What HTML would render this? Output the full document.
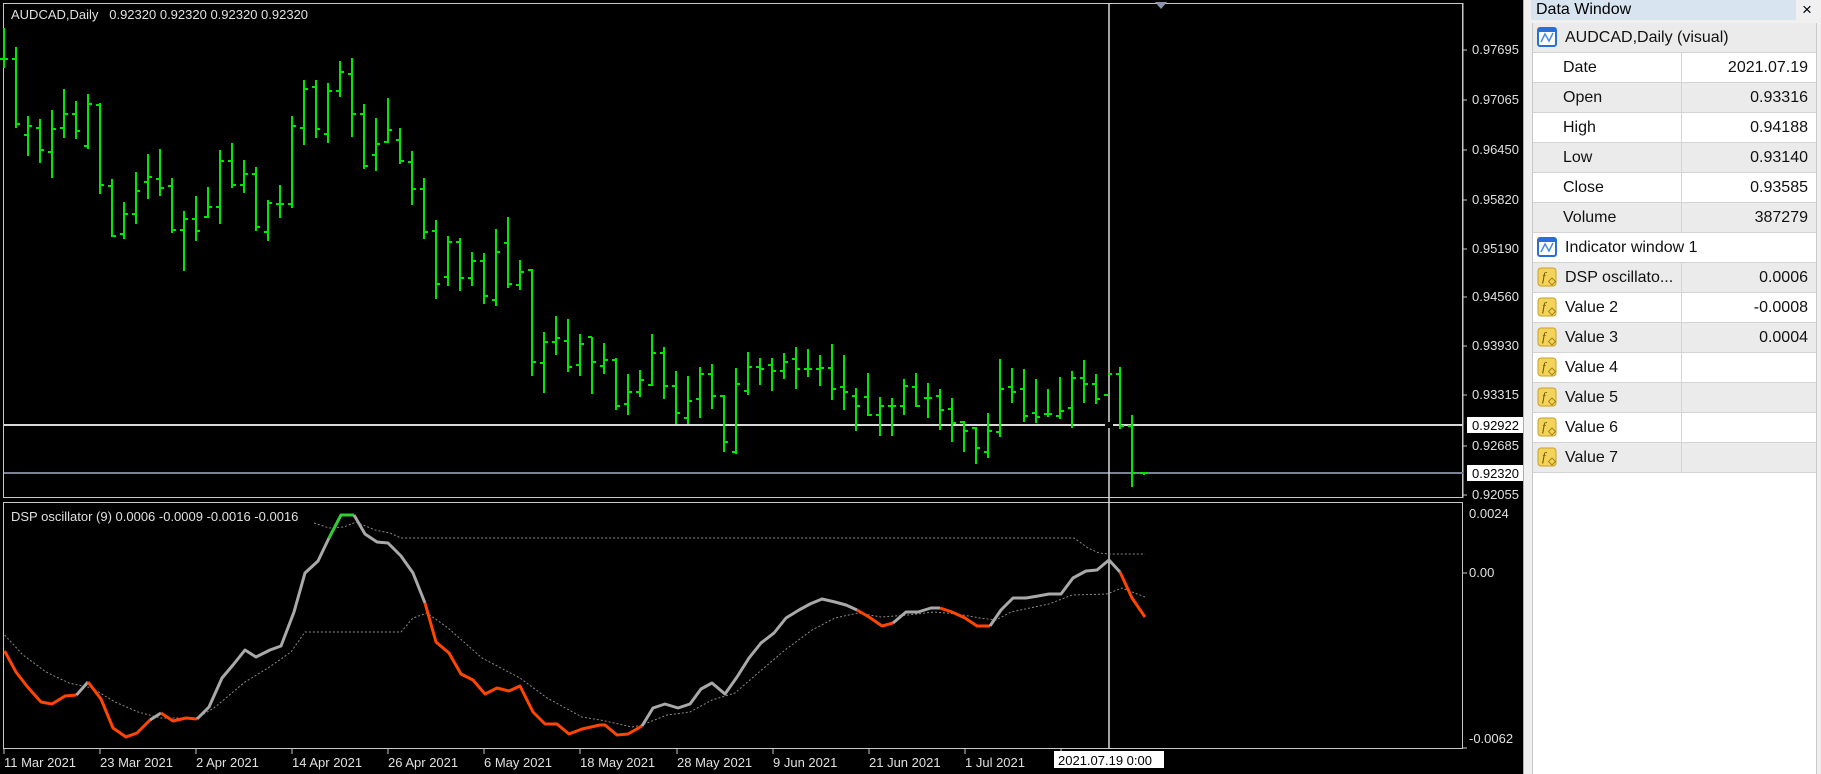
<!DOCTYPE html>
<html><head><meta charset="utf-8"><style>
html,body{margin:0;padding:0;width:1821px;height:774px;overflow:hidden;background:#000;}
#dw{position:absolute;left:1523px;top:0;width:298px;height:774px;background:#f0f0f0;border-left:1px solid #b0b0b0;}
#title{position:absolute;left:7px;top:0;width:265px;height:20px;background:#d8e4f0;font:16px "Liberation Sans",sans-serif;color:#000;line-height:20px;padding-left:5px;box-sizing:border-box;}
#close{position:absolute;left:278px;top:0;font:17px "Liberation Sans",sans-serif;line-height:20px;}
#tbl{position:absolute;left:8px;top:23px;width:283px;height:751px;background:#fff;border-left:1px solid #c8c8c8;border-right:1px solid #c8c8c8;}
.r{position:absolute;left:0;width:283px;height:29px;border-bottom:1px solid #d4d4d4;font:16px "Liberation Sans",sans-serif;color:#111;line-height:29px;}
.g{background:#ebebeb;}
.n{position:absolute;left:30px;}
.v{position:absolute;right:8px;}
.c{position:absolute;left:148px;top:0;width:1px;height:29px;background:#d4d4d4;}
.ic{position:absolute;left:4px;top:4px;width:20px;height:20px;}
.h .n{left:32px;}
</style></head><body>
<svg width="1523" height="774" style="position:absolute;left:0;top:0" font-family="Liberation Sans, sans-serif" font-size="13">
<rect x="3.5" y="3.5" width="1459" height="494" fill="none" stroke="#c8c8c8"/>
<rect x="3.5" y="502.5" width="1459" height="246" fill="none" stroke="#c8c8c8"/>
<line x1="1463" y1="3" x2="1463" y2="498" stroke="#c8c8c8"/>
<text x="11" y="19" fill="#e0e0e0">AUDCAD,Daily&#160;&#160; 0.92320 0.92320 0.92320 0.92320</text>
<polygon points="1155,2 1167,2 1161,9" fill="#8a96a8"/>
<line x1="4" y1="425" x2="1463" y2="425" stroke="#d8d8d8" stroke-width="2"/>
<line x1="4" y1="473" x2="1463" y2="473" stroke="#7a8494" stroke-width="2"/>
<line x1="1109" y1="3" x2="1109" y2="749" stroke="#d8d8d8" stroke-width="1.5"/>
<path fill="none" stroke="#00e600" stroke-width="2" d="M4 28V68M0 59H4M4 59H8M16 47V128M12 59H16M16 124H20M28 116V156M24 135H28M28 126H32M40 119V163M36 128H40M40 150H44M52 110V178M48 152H52M52 129H56M64 89V138M60 128H64M64 114H68M76 101V139M72 114H76M76 131H80M88 94V149M84 146H88M88 104H92M100 103V194M96 105H100M100 185H104M112 179V237M108 186H112M112 236H116M124 202V239M120 234H124M124 214H128M136 172V224M132 214H136M136 191H140M148 154V199M144 182H148M148 177H152M160 149V196M156 179H160M160 188H164M172 178V233M168 186H172M172 230H176M184 211V271M180 230H184M184 219H188M196 196V241M192 219H196M196 231H200M208 187V218M204 217H208M208 207H212M220 150V224M216 207H220M220 161H224M232 143V188M228 161H232M232 185H236M244 160V193M240 185H244M244 174H248M256 167V231M252 174H256M256 227H260M268 200V241M264 232H268M268 203H272M280 185V218M276 204H280M280 204H284M292 116V208M288 204H292M292 126H296M304 80V145M300 128H304M304 89H308M316 80V138M312 87H316M316 129H320M328 83V143M324 134H328M328 91H332M340 61V97M336 91H340M340 72H344M352 58V137M348 74H352M352 114H356M364 104V169M360 114H364M364 166H368M376 118V171M372 155H376M376 144H380M388 98V143M384 142H388M388 130H392M400 128V164M396 140H400M400 161H404M412 151V205M408 162H412M412 189H416M424 178V239M420 189H424M424 232H428M436 220V299M432 231H436M436 284H440M448 236V286M444 277H448M448 242H452M460 238V291M456 242H460M460 278H464M472 252V286M468 278H472M472 261H476M484 253V304M480 261H484M484 296H488M496 229V306M492 300H496M496 252H500M508 217V288M504 243H508M508 284H512M520 260V290M516 285H520M520 272H524M532 269V376M528 270H532M532 362H536M544 332V393M540 363H544M544 342H548M556 316V355M552 342H556M556 338H560M568 319V372M564 341H568M568 367H572M580 334V376M576 365H580M580 344H584M592 337V394M588 337H592M592 362H596M604 343V374M600 366H604M604 360H608M616 358V410M612 360H616M616 406H620M628 374V415M624 404H628M628 392H632M640 370V397M636 392H640M640 380H644M652 334V386M648 385H652M652 353H656M664 347V399M660 353H664M664 386H668M676 371V424M672 386H676M676 413H680M688 376V424M684 418H688M688 401H692M700 367V418M696 399H700M700 374H704M712 364V409M708 374H712M712 396H716M724 395V452M720 396H724M724 442H728M736 368V454M732 452H736M736 384H740M748 352V395M744 391H748M748 367H752M760 358V385M756 367H760M760 369H764M772 358V391M768 365H772M772 371H776M784 353V379M780 371H784M784 362H788M796 347V389M792 359H796M796 369H800M808 349V377M804 369H808M808 369H812M820 355V386M816 369H820M820 368H824M832 344V400M828 368H832M832 389H836M844 355V410M840 387H844M844 392H848M856 388V431M852 396H856M856 406H860M868 373V416M864 397H868M868 415H872M880 397V436M876 415H880M880 406H884M892 398V436M888 406H892M892 406H896M904 379V415M900 406H904M904 386H908M916 373V407M912 387H916M916 406H920M928 383V418M924 398H928M928 398H932M940 389V430M936 396H940M940 410H944M952 398V442M948 409H952M952 423H956M964 421V452M960 422H964M964 431H968M976 427V464M972 428H976M976 448H980M988 413V458M984 452H988M988 431H992M1000 359V437M996 432H1000M1000 389H1004M1012 368V403M1008 387H1012M1012 392H1016M1024 369V422M1020 389H1024M1024 416H1028M1036 379V423M1032 413H1036M1036 417H1040M1048 389V417M1044 414H1048M1048 414H1052M1060 377V419M1056 416H1060M1060 411H1064M1072 371V428M1068 408H1072M1072 378H1076M1084 360V403M1080 378H1084M1084 384H1088M1096 374V404M1092 384H1096M1096 399H1100M1120 367V429M1116 374H1120M1120 426H1124M1132 415V487M1128 426H1132M1132 473H1136M1144 472V475M1140 473H1144M1144 473H1148"/>
<path fill="none" stroke="#00e600" stroke-width="2" d="M1104 395H1108M1108 374H1112"/>
<rect x="1105" y="422" width="8" height="6" fill="#000"/>
<g fill="#e0e0e0">
<text x="1472" y="54">0.97695</text><text x="1472" y="104">0.97065</text><text x="1472" y="154">0.96450</text><text x="1472" y="204">0.95820</text><text x="1472" y="253">0.95190</text><text x="1472" y="301">0.94560</text><text x="1472" y="350">0.93930</text><text x="1472" y="399">0.93315</text><text x="1472" y="450">0.92685</text><text x="1472" y="499">0.92055</text>
<text x="1469" y="518">0.0024</text><text x="1469" y="577">0.00</text><text x="1469" y="743">-0.0062</text>
</g>
<g stroke="#c8c8c8"><path d="M1463 50H1467M1463 100H1467M1463 150H1467M1463 200H1467M1463 249H1467M1463 297H1467M1463 346H1467M1463 395H1467M1463 446H1467M1463 495H1467M1463 573H1467M1463 748H1467"/></g>
<rect x="1467" y="417" width="56" height="16" fill="#fff"/><text x="1472" y="430" fill="#000">0.92922</text>
<rect x="1467" y="465" width="56" height="16" fill="#fff"/><text x="1472" y="478" fill="#000">0.92320</text>
<text x="11" y="521" fill="#e0e0e0">DSP oscillator (9) 0.0006 -0.0009 -0.0016 -0.0016</text>
<g fill="none" stroke="#8a8a8a" stroke-width="1" stroke-dasharray="2,2">
<polyline points="4.6,635 23,655 46,672 69,683 92,688 115,702 138,712 161,718 197,718 214,708 245,682 268,668 291,652 305,632 401,632 413,618 427,613 448,628 482,658 520,678 547,698 582,717 600,720 605,721 632,727 642,725 667,715 690,712 712,700 735,693 758,673 785,650 812,630 835,618 858,613 881,617 908,615 934,612 957,614 980,618 996,620 1011,612 1049,604 1072,595 1107,594 1122,588 1145,597"/>
<polyline points="314,523 329,528 344,527 356,522 375,530 390,533 401,538 1074,538 1088,548 1099,553 1109,554 1145,554"/>
</g>
<g fill="none" stroke-width="3" stroke-linejoin="round">
<polyline stroke="#ff4500" points="4.6,651 16,672 27.6,687 41,702 52,704 65,696 76.5,695"/>
<polyline stroke="#a9a9a9" points="76.5,695 88,682"/>
<polyline stroke="#ff4500" points="88,682 101,699 113,728 126,737 137,733 150,720"/>
<polyline stroke="#a9a9a9" points="150,720 161,713"/>
<polyline stroke="#ff4500" points="161,713 173,721 186,718 197,719"/>
<polyline stroke="#a9a9a9" points="197,719 209,707 222,678 233,665 245,650 256,657 270,650 281,646 294,612 305,573 318,561 329,538"/>
<polyline stroke="#32cd32" points="329,538 341,515 354,515"/>
<polyline stroke="#a9a9a9" points="354,515 365,534 377,542 388,543 401,556 413,573 425,603"/>
<polyline stroke="#ff4500" points="425,603 436,642 449,653 461,674 473,680 485,694 497,688 509,691 520,686 533,712 545,724 557,724 569,734 582,729 600,725 605,725 617,735 628,734 642,726"/>
<polyline stroke="#a9a9a9" points="642,726 653,708 665,704 678,708 690,704 701,689 712,683 725,694 737,677 749,658 761,643 774,633 786,618 799,610 810,604 822,599 835,602 846,605 857,610"/>
<polyline stroke="#ff4500" points="857,610 869,617 882,626 893,623"/>
<polyline stroke="#a9a9a9" points="893,623 906,612 918,612 931,608 940,608"/>
<polyline stroke="#ff4500" points="940,608 952,612 965,618 977,626 990,626"/>
<polyline stroke="#a9a9a9" points="990,626 1001,610 1013,598 1026,598 1038,596 1049,594 1061,594 1073,578 1086,571 1097,570 1109,560 1120,572"/>
<polyline stroke="#ff4500" points="1120,572 1132,598 1145,617"/>
</g>
<path stroke="#c8c8c8" d="M4 749V754M100 749V754M196 749V754M292 749V754M388 749V754M484 749V754M580 749V754M677 749V754M773 749V754M869 749V754M965 749V754M1061 749V754"/>
<g fill="#e0e0e0">
<text x="4" y="767">11 Mar 2021</text><text x="100" y="767">23 Mar 2021</text><text x="196" y="767">2 Apr 2021</text><text x="292" y="767">14 Apr 2021</text><text x="388" y="767">26 Apr 2021</text><text x="484" y="767">6 May 2021</text><text x="580" y="767">18 May 2021</text><text x="677" y="767">28 May 2021</text><text x="773" y="767">9 Jun 2021</text><text x="869" y="767">21 Jun 2021</text><text x="965" y="767">1 Jul 2021</text>
</g>
<rect x="1054" y="751" width="110" height="17" fill="#fff"/><text x="1058" y="765" fill="#000">2021.07.19 0:00</text>
</svg>
<div id="dw">
<div id="title">Data Window</div><div id="close">×</div>
<div id="tbl">
<div class="r g h" style="top:0"><svg class="ic" viewBox="0 0 20 20"><rect x="1" y="1" width="18" height="18" rx="2" fill="#fff" stroke="#2a6fd6" stroke-width="2"/><rect x="1" y="1" width="18" height="4" fill="#2a6fd6"/><path d="M4 15 L8 7 L12 14 L16 6" fill="none" stroke="#4a8ae6" stroke-width="1.5"/></svg><span class="n">AUDCAD,Daily (visual)</span></div>
<div class="r" style="top:30px"><span class="n">Date</span><div class="c"></div><span class="v">2021.07.19</span></div>
<div class="r g" style="top:60px"><span class="n">Open</span><div class="c"></div><span class="v">0.93316</span></div>
<div class="r" style="top:90px"><span class="n">High</span><div class="c"></div><span class="v">0.94188</span></div>
<div class="r g" style="top:120px"><span class="n">Low</span><div class="c"></div><span class="v">0.93140</span></div>
<div class="r" style="top:150px"><span class="n">Close</span><div class="c"></div><span class="v">0.93585</span></div>
<div class="r g" style="top:180px"><span class="n">Volume</span><div class="c"></div><span class="v">387279</span></div>
<div class="r h" style="top:210px"><svg class="ic" viewBox="0 0 20 20"><rect x="1" y="1" width="18" height="18" rx="2" fill="#fff" stroke="#2a6fd6" stroke-width="2"/><rect x="1" y="1" width="18" height="4" fill="#2a6fd6"/><path d="M4 15 L8 7 L12 14 L16 6" fill="none" stroke="#4a8ae6" stroke-width="1.5"/></svg><span class="n">Indicator window 1</span></div>
<div class="r g h" style="top:240px"><svg class="ic" viewBox="0 0 20 20"><rect x="1" y="1" width="18" height="18" rx="3" fill="#f3d35a" stroke="#c9a227"/><text x="5" y="14" font-family="Liberation Serif,serif" font-style="italic" font-size="13" fill="#6a5200">f</text><path d="M15 11 L18.5 14.5 L15 18 L11.5 14.5Z" fill="#f3d35a" stroke="#a88414"/></svg><span class="n">DSP oscillato...</span><div class="c"></div><span class="v">0.0006</span></div>
<div class="r h" style="top:270px"><svg class="ic" viewBox="0 0 20 20"><rect x="1" y="1" width="18" height="18" rx="3" fill="#f3d35a" stroke="#c9a227"/><text x="5" y="14" font-family="Liberation Serif,serif" font-style="italic" font-size="13" fill="#6a5200">f</text><path d="M15 11 L18.5 14.5 L15 18 L11.5 14.5Z" fill="#f3d35a" stroke="#a88414"/></svg><span class="n">Value 2</span><div class="c"></div><span class="v">-0.0008</span></div>
<div class="r g h" style="top:300px"><svg class="ic" viewBox="0 0 20 20"><rect x="1" y="1" width="18" height="18" rx="3" fill="#f3d35a" stroke="#c9a227"/><text x="5" y="14" font-family="Liberation Serif,serif" font-style="italic" font-size="13" fill="#6a5200">f</text><path d="M15 11 L18.5 14.5 L15 18 L11.5 14.5Z" fill="#f3d35a" stroke="#a88414"/></svg><span class="n">Value 3</span><div class="c"></div><span class="v">0.0004</span></div>
<div class="r h" style="top:330px"><svg class="ic" viewBox="0 0 20 20"><rect x="1" y="1" width="18" height="18" rx="3" fill="#f3d35a" stroke="#c9a227"/><text x="5" y="14" font-family="Liberation Serif,serif" font-style="italic" font-size="13" fill="#6a5200">f</text><path d="M15 11 L18.5 14.5 L15 18 L11.5 14.5Z" fill="#f3d35a" stroke="#a88414"/></svg><span class="n">Value 4</span><div class="c"></div></div>
<div class="r g h" style="top:360px"><svg class="ic" viewBox="0 0 20 20"><rect x="1" y="1" width="18" height="18" rx="3" fill="#f3d35a" stroke="#c9a227"/><text x="5" y="14" font-family="Liberation Serif,serif" font-style="italic" font-size="13" fill="#6a5200">f</text><path d="M15 11 L18.5 14.5 L15 18 L11.5 14.5Z" fill="#f3d35a" stroke="#a88414"/></svg><span class="n">Value 5</span><div class="c"></div></div>
<div class="r h" style="top:390px"><svg class="ic" viewBox="0 0 20 20"><rect x="1" y="1" width="18" height="18" rx="3" fill="#f3d35a" stroke="#c9a227"/><text x="5" y="14" font-family="Liberation Serif,serif" font-style="italic" font-size="13" fill="#6a5200">f</text><path d="M15 11 L18.5 14.5 L15 18 L11.5 14.5Z" fill="#f3d35a" stroke="#a88414"/></svg><span class="n">Value 6</span><div class="c"></div></div>
<div class="r g h" style="top:420px"><svg class="ic" viewBox="0 0 20 20"><rect x="1" y="1" width="18" height="18" rx="3" fill="#f3d35a" stroke="#c9a227"/><text x="5" y="14" font-family="Liberation Serif,serif" font-style="italic" font-size="13" fill="#6a5200">f</text><path d="M15 11 L18.5 14.5 L15 18 L11.5 14.5Z" fill="#f3d35a" stroke="#a88414"/></svg><span class="n">Value 7</span><div class="c"></div></div>
</div>
</div>
</body></html>
